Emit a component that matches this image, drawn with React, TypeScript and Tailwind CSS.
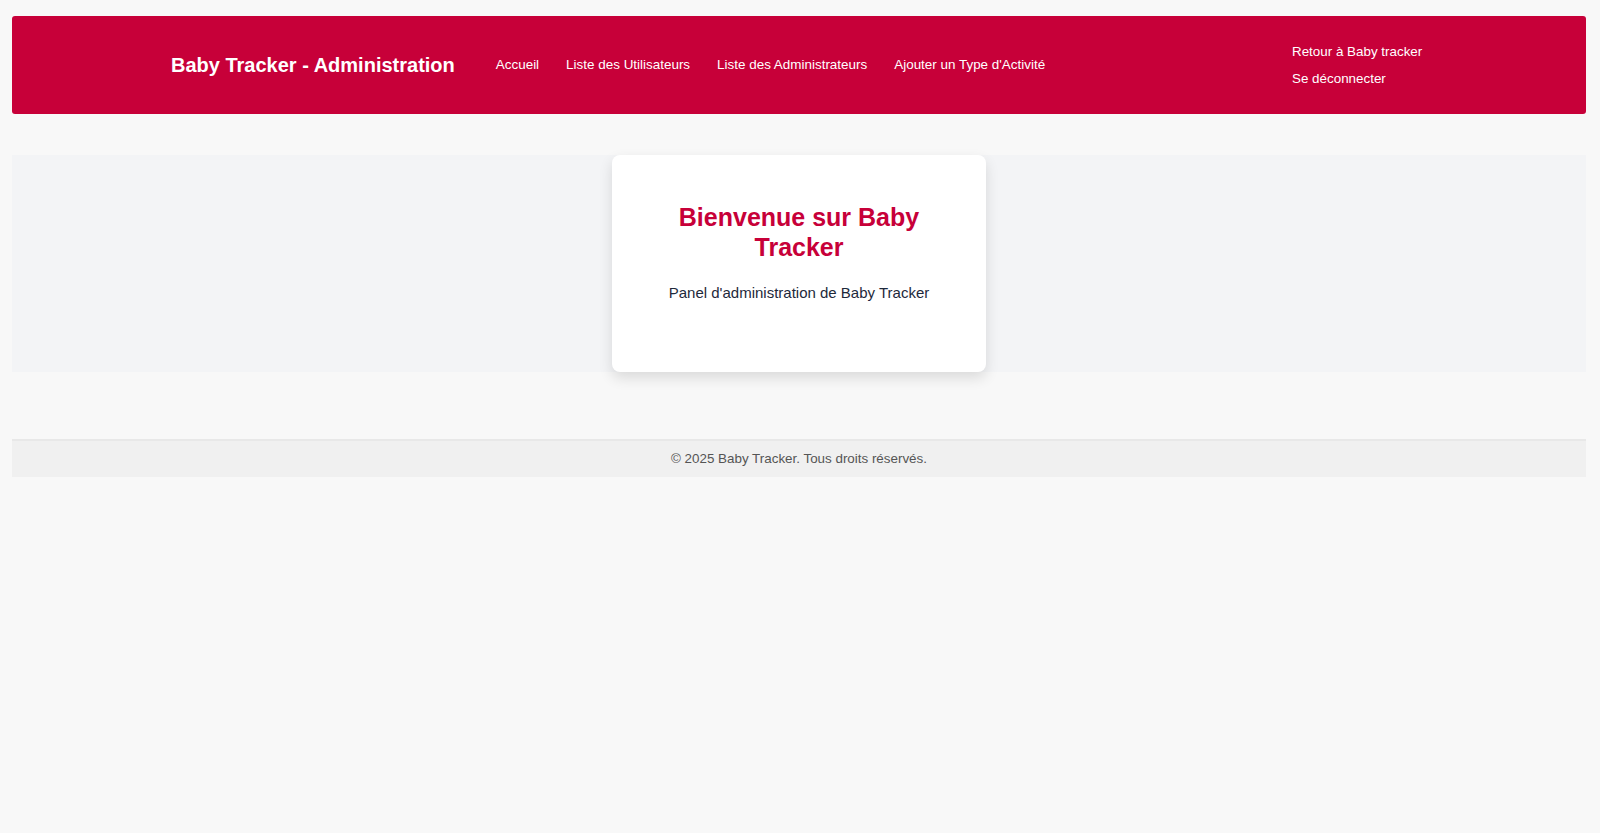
import React from 'react';

const navLinks = ['Accueil', 'Liste des Utilisateurs', 'Liste des Administrateurs', "Ajouter un Type d'Activité"];

const Header: React.FC = () => (
  <header className="h-[98px] rounded-[3px] bg-[#c70039] text-white flex items-center pl-[159px] pr-[160px]">
    <h1 className="text-[20px] font-bold leading-none mr-[41px]">Baby Tracker - Administration</h1>
    <nav className="flex items-center gap-[27px] text-[13.45px]">
      {navLinks.map((l) => (
        <a key={l} href="#" className="hover:underline">
          {l}
        </a>
      ))}
    </nav>
    <div className="ml-auto w-[134px] flex flex-col gap-[11px] text-[13.4px] leading-[16px] pt-[1px] whitespace-nowrap">
      <a href="#" className="hover:underline">Retour à Baby tracker</a>
      <a href="#" className="hover:underline">Se déconnecter</a>
    </div>
  </header>
);

const App: React.FC = () => {
  return (
    <div
      className="min-h-[833px] bg-[#f8f8f8] pl-3 pr-[14px] pt-4"
      style={{ fontFamily: '"Liberation Sans", Arial, sans-serif' }}
    >
      <Header />
      <main className="mt-[41px] bg-[#f3f4f6] flex justify-center">
        <div className="w-[374px] h-[217px] bg-white rounded-lg shadow-[0_6px_14px_rgba(0,0,0,0.12)] px-10 pt-[47px] text-center">
          <h2 className="text-[25px] leading-[30px] font-bold text-[#c70039] px-2">Bienvenue sur Baby Tracker</h2>
          <p className="mt-[20px] text-[15px] leading-[22px] text-[#1e293b]">Panel d'administration de Baby Tracker</p>
        </div>
      </main>
      <footer className="mt-[67px] h-[38px] border-t-2 border-[#e8e8e8] bg-[#f0f0f0] flex items-center justify-center text-[13.4px] text-[#555]">
        © 2025 Baby Tracker. Tous droits réservés.
      </footer>
    </div>
  );
};

export default App;
